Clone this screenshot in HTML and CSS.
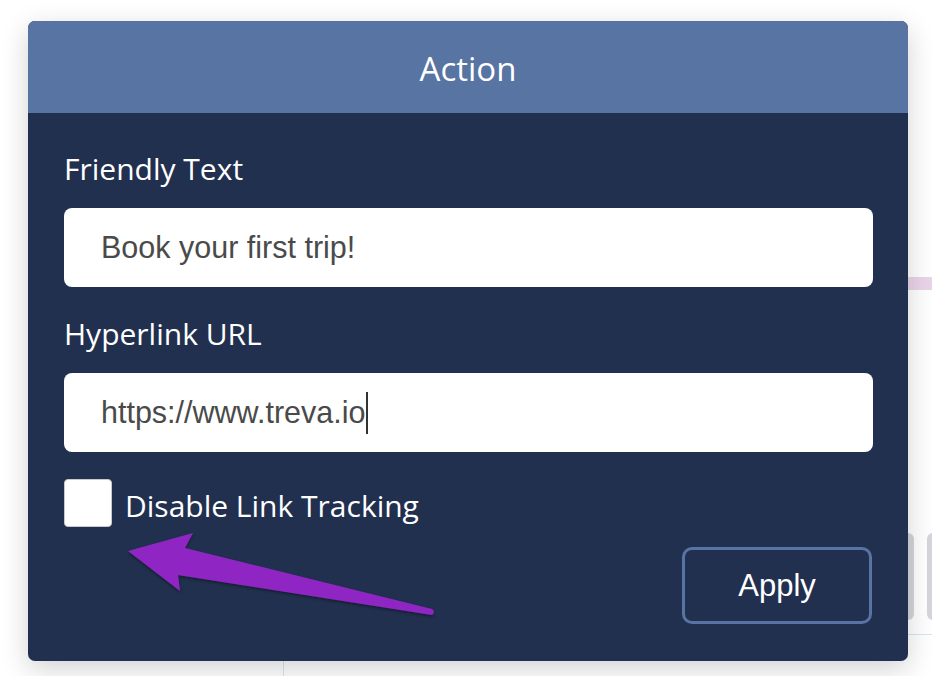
FILE: index.html
```html
<!DOCTYPE html>
<html>
<head>
<meta charset="utf-8">
<link rel="stylesheet" href="styles.css">
</head>
<body>
<div class="page">
  <div class="pink-bar"></div>
  <div class="btn-row"><div class="ghost-btn ghost-a"></div><div class="ghost-btn ghost-b"></div></div>
  <div class="rule"></div>
  <div class="vline"></div>
</div>

<div class="modal">
  <div class="modal-header">Action</div>
  <div class="modal-body">
    <div class="label label-first">Friendly Text</div>
    <div class="field">Book your first trip!</div>
    <div class="label">Hyperlink URL</div>
    <div class="field">https://www.treva.io<span class="caret"></span></div>
    <div class="check-row">
      <div class="checkbox"></div>
      <div class="check-label">Disable Link Tracking</div>
    </div>
    <div class="actions">
      <div class="apply">Apply</div>
    </div>
  </div>
</div>

<svg class="arrow" viewBox="0 0 932 676" width="932" height="676">
  <defs>
    <filter id="sh" x="-20%" y="-20%" width="140%" height="140%">
      <feDropShadow dx="0" dy="1.5" stdDeviation="1.5" flood-color="#000" flood-opacity="0.45"/>
    </filter>
  </defs>
  <path filter="url(#sh)" fill="#8f28c4" d="M128 551 L193 533 L185 548 L432 609 Q436 612 432 615 L178 575 L180 591 Z"/>
</svg>
</body>
</html>
```
FILE: styles.css
```css
html, body {
  margin: 0;
  padding: 0;
  background: #ffffff;
  width: 932px;
  height: 676px;
  overflow: hidden;
}
body {
  position: relative;
  font-family: "Open Sans", "Noto Sans", sans-serif;
}
.page {
  padding-top: 277px;
}
.pink-bar {
  margin-left: 880px;
  height: 13px;
  background: #ead5e8;
}
.btn-row {
  margin-top: 243px;
  margin-left: 880px;
  display: flex;
  gap: 13px;
}
.ghost-btn {
  flex-shrink: 0;
  height: 87px;
  background: #d4d6db;
  border-radius: 6px;
}
.ghost-a { width: 34px; }
.ghost-b { width: 40px; }
.rule {
  margin-top: 14px;
  margin-left: 283px;
  height: 1px;
  background: #d6e7f2;
}
.vline {
  margin-left: 283px;
  width: 1px;
  height: 42px;
  background: #d6e7f2;
}
.modal {
  position: absolute;
  left: 28px;
  top: 21px;
  width: 880px;
  border-radius: 7px;
  overflow: hidden;
  background: #21304f;
  box-shadow: 0 8px 28px rgba(0, 0, 0, 0.18);
}
.modal-header {
  height: 92px;
  line-height: 96px;
  background: #5874a2;
  color: #ffffff;
  text-align: center;
  font-size: 33px;
  font-weight: 400;
  overflow: hidden;
}
.modal-body {
  padding: 0 35px 37px 36px;
  color: #ffffff;
}
.label {
  font-size: 30px;
  line-height: 34px;
  margin-top: 30px;
  margin-bottom: 22px;
}
.label-first {
  margin-top: 39px;
}
.field {
  height: 79px;
  background: #ffffff;
  border-radius: 8px;
  padding-left: 37px;
  font-family: "Liberation Sans", Arial, sans-serif;
  font-size: 30.5px;
  color: #4a4a4a;
  display: flex;
  align-items: center;
}
.caret {
  display: inline-block;
  width: 2px;
  height: 42px;
  background: #333333;
  margin-left: 1px;
}
.check-row {
  display: flex;
  align-items: center;
  gap: 13px;
  margin-top: 27px;
}
.checkbox {
  width: 46px;
  height: 46px;
  background: #ffffff;
  border: 1px solid #c9c9c9;
  border-radius: 4px;
}
.check-label {
  font-size: 30px;
  line-height: 34px;
  padding-top: 6px;
}
.actions {
  display: flex;
  justify-content: flex-end;
  margin-top: 20px;
  padding-right: 1px;
}
.apply {
  width: 184px;
  height: 71px;
  border: 3px solid #5874a2;
  border-radius: 10px;
  display: flex;
  align-items: center;
  justify-content: center;
  font-family: "Liberation Sans", Arial, sans-serif;
  font-size: 31px;
  color: #ffffff;
}
.arrow {
  position: absolute;
  left: 0;
  top: 0;
  pointer-events: none;
}
```
